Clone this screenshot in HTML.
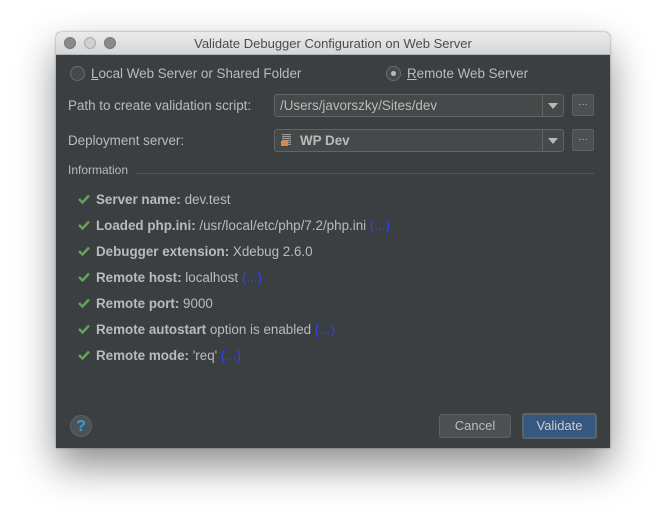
<!DOCTYPE html>
<html><head><style>
body{margin:0;width:666px;height:529px;background:#fff;position:relative;overflow:hidden;font-family:"Liberation Sans",sans-serif;}
.win{position:absolute;left:56px;top:32px;width:554px;height:416px;background:#3c3f41;box-shadow:0 18px 40px rgba(0,0,0,.45),0 0 2px rgba(0,0,0,.4);border-radius:5px 5px 0 0;overflow:hidden}
.tb{position:absolute;left:0;top:0;width:554px;height:22px;background:linear-gradient(#ebebeb,#d6d6d6);border-bottom:1px solid #b4b4b4;font-size:13px;color:#4c4c4c;text-align:center;line-height:23px}
.dot{position:absolute;top:5px;width:12px;height:12px;border-radius:50%;border:1px solid #777;box-sizing:border-box}
.t{position:absolute;color:#bbbbbb;font-size:13.4px;white-space:nowrap}
.radio{position:absolute;width:15px;height:15px;border-radius:50%;border:1px solid #6b6b6b;background:#45494a;box-sizing:border-box}
.combo{position:absolute;left:218px;width:290px;height:23px;border:1px solid #646464;background:#45494a;border-radius:3px;box-sizing:border-box}
.combo .arr{position:absolute;right:0;top:0;width:20px;height:21px;border-left:1px solid #646464}
.combo .arr:after{content:"";position:absolute;left:5px;top:8px;border-left:5px solid transparent;border-right:5px solid transparent;border-top:6px solid #b8b8b8}
.btn{position:absolute;left:516px;width:22px;height:22px;background:#4c5052;border:1px solid #5e6060;border-radius:2px;box-sizing:border-box;color:#bbb;font-size:10px;text-align:center;line-height:20px}
.chk{position:absolute;left:22px;width:12px;height:10px}
.row b{font-weight:bold}
.blue{color:#2f40ff}
</style></head><body>
<div class="win">
<div class="tb"><div class="dot" style="left:8px;background:#8a8a8a"></div><div class="dot" style="left:28px;background:#d0d0d0;border-color:#aaa"></div><div class="dot" style="left:48px;background:#8a8a8a"></div>Validate Debugger Configuration on Web Server</div>
<div class="radio" style="left:14px;top:34px"></div>
<div class="t" style="left:35px;top:34px"><u>L</u>ocal Web Server or Shared Folder</div>
<div class="radio" style="left:330px;top:34px"><div style="position:absolute;left:4px;top:4px;width:5px;height:5px;border-radius:50%;background:#bbb"></div></div>
<div class="t" style="left:351px;top:34px"><u>R</u>emote Web Server</div>
<div class="t" style="left:12px;top:66px">Path to create validation script:</div>
<div class="combo" style="top:62px"><div class="t" style="left:5px;top:3px">/Users/javorszky/Sites/dev</div><div class="arr"></div></div>
<div class="btn" style="top:62px">···</div>
<div class="t" style="left:12px;top:101px">Deployment server:</div>
<div class="combo" style="top:97px">
<div style="position:absolute;left:7px;top:4px;width:9px;height:11px;background:repeating-linear-gradient(#999 0 1px,#555 1px 2px)"></div>
<div style="position:absolute;left:6px;top:11px;width:7px;height:5px;background:#e8863a"></div>
<div class="t" style="left:25px;top:3px;font-weight:bold">WP Dev</div><div class="arr"></div></div>
<div class="btn" style="top:97px">···</div>
<div class="t" style="left:12px;top:131px;font-size:12px">Information</div>
<div style="position:absolute;left:80px;top:141px;width:458px;height:1px;background:#555"></div>
<div class="row">
<svg class="chk" style="top:162px" viewBox="0 0 12 10"><path d="M1 5l3.5 3.5L11 1.5" stroke="#5fa84f" stroke-width="2.4" fill="none"/></svg>
<div class="t" style="left:40px;top:160px"><b>Server name:</b> dev.test</div>
<svg class="chk" style="top:188px" viewBox="0 0 12 10"><path d="M1 5l3.5 3.5L11 1.5" stroke="#5fa84f" stroke-width="2.4" fill="none"/></svg>
<div class="t" style="left:40px;top:186px"><b>Loaded php.ini:</b> /usr/local/etc/php/7.2/php.ini <span class="blue">(...)</span></div>
<svg class="chk" style="top:214px" viewBox="0 0 12 10"><path d="M1 5l3.5 3.5L11 1.5" stroke="#5fa84f" stroke-width="2.4" fill="none"/></svg>
<div class="t" style="left:40px;top:212px"><b>Debugger extension:</b> Xdebug 2.6.0</div>
<svg class="chk" style="top:240px" viewBox="0 0 12 10"><path d="M1 5l3.5 3.5L11 1.5" stroke="#5fa84f" stroke-width="2.4" fill="none"/></svg>
<div class="t" style="left:40px;top:238px"><b>Remote host:</b> localhost <span class="blue">(...)</span></div>
<svg class="chk" style="top:266px" viewBox="0 0 12 10"><path d="M1 5l3.5 3.5L11 1.5" stroke="#5fa84f" stroke-width="2.4" fill="none"/></svg>
<div class="t" style="left:40px;top:264px"><b>Remote port:</b> 9000</div>
<svg class="chk" style="top:292px" viewBox="0 0 12 10"><path d="M1 5l3.5 3.5L11 1.5" stroke="#5fa84f" stroke-width="2.4" fill="none"/></svg>
<div class="t" style="left:40px;top:290px"><b>Remote autostart</b> option is enabled <span class="blue">(...)</span></div>
<svg class="chk" style="top:318px" viewBox="0 0 12 10"><path d="M1 5l3.5 3.5L11 1.5" stroke="#5fa84f" stroke-width="2.4" fill="none"/></svg>
<div class="t" style="left:40px;top:316px"><b>Remote mode:</b> 'req' <span class="blue">(...)</span></div>
</div>
<div style="position:absolute;left:14px;top:383px;width:22px;height:22px;border-radius:50%;background:#4a5357;border:1px solid #5a6366;box-sizing:border-box;color:#3d9be0;font-weight:bold;font-size:16px;text-align:center;line-height:21px">?</div>
<div style="position:absolute;left:383px;top:382px;width:72px;height:24px;background:#4c5052;border:1px solid #5e6060;border-radius:3px;box-sizing:border-box;color:#bbb;font-size:13px;text-align:center;line-height:22px">Cancel</div>
<div style="position:absolute;left:466px;top:381px;width:75px;height:26px;background:#365880;border:2px solid #5d6468;border-radius:3px;box-sizing:border-box;color:#ccc;font-size:13px;text-align:center;line-height:22px">Validate</div>
</div>
</body></html>
